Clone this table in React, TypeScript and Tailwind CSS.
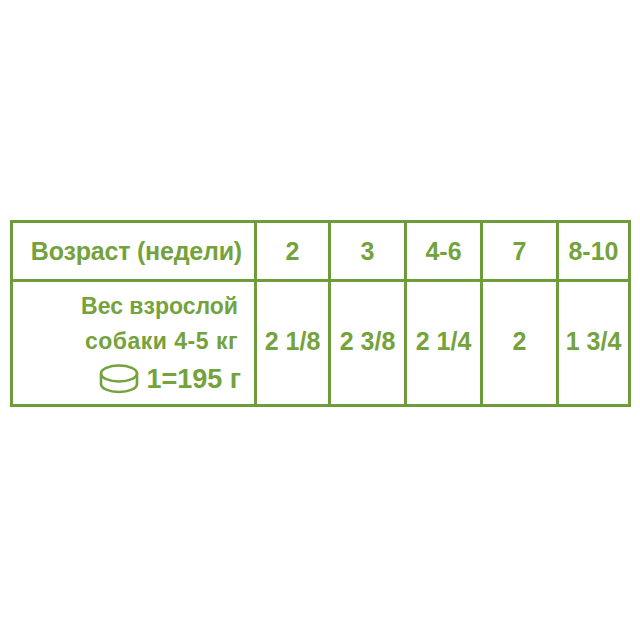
import React from "react";

function Can() {
  return (
    <svg width="40" height="30" viewBox="0 0 40 30" fill="none" stroke="#74a23c" strokeWidth="2.6">
      <ellipse cx="20" cy="9.5" rx="18" ry="8" />
      <path d="M2 9.5 V20 A18 8 0 0 0 38 20 V9.5" />
    </svg>
  );
}

export default function App() {
  const heads = ["2", "3", "4-6", "7", "8-10"];
  const vals = ["2 1/8", "2 3/8", "2 1/4", "2", "1 3/4"];
  return (
    <div className="w-[640px] h-[630px] bg-white pt-[220px] pl-[10px]" style={{ fontFamily: '"Liberation Sans", Arial, sans-serif' }}>
      <div className="inline-grid grid-cols-[241px_71px_73px_73px_73px_69px] grid-rows-[56px_122px] gap-[3px] p-[3px] bg-[#6f9c3a] font-bold text-[#74a23c]">
        <div className="bg-white flex items-center justify-end pr-[12px] text-[25px] leading-none tracking-[-0.2px]">Возраст (недели)</div>
        {heads.map((h) => (
          <div key={h} className="bg-white flex items-center justify-center text-[25px] leading-none">{h}</div>
        ))}
        <div className="bg-white flex flex-col items-end pr-[16px] pt-[7px] text-[23px] leading-none">
          <div className="h-[35px] flex items-center">Вес взрослой</div>
          <div className="h-[35px] flex items-center tracking-[0.5px]">собаки 4-5 кг</div>
          <div className="h-[40px] flex items-center gap-[7px] -mr-[3px]">
            <Can />
            <span className="text-[27px]">1=195 г</span>
          </div>
        </div>
        {vals.map((v, i) => (
          <div key={i} className="bg-white flex items-center justify-center text-[25px] leading-none pb-[3px]">{v}</div>
        ))}
      </div>
    </div>
  );
}
